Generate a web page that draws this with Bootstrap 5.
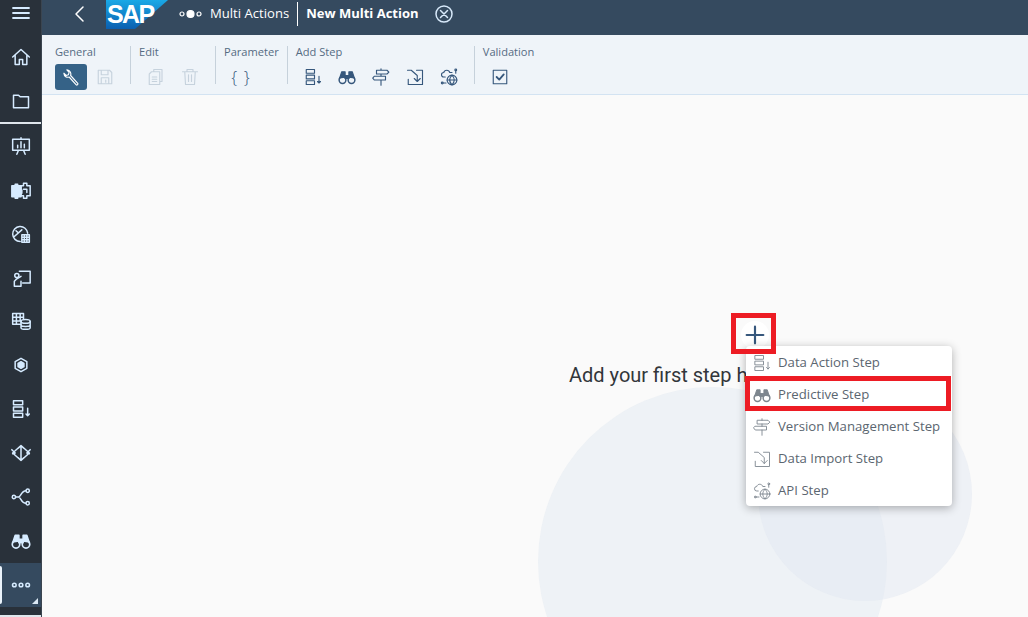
<!DOCTYPE html>
<html lang="en">

<head>
  <meta charset="UTF-8" />
  <meta name="viewport" content="width=device-width, initial-scale=1" />
  <title>New Multi Action</title>
  <link href="https://cdn.jsdelivr.net/npm/bootstrap@5.3.0/dist/css/bootstrap.min.css" rel="stylesheet">
  <style>
    html, body { height: 617px; overflow: hidden; }
    body { font-family: "Open Sans", "Liberation Sans", sans-serif; background: #fafafa; color: #32363a; }
    svg.ico { fill: none; stroke: currentColor; stroke-width: 1.5; stroke-linecap: round; stroke-linejoin: round; display: block; }

    .side-rail { width: 42px; height: 617px; background: #29313a; color: #d6ebff; flex: none; border-right: 1px solid #3b4550; }
    .side-rail svg.ico { stroke-width: 1.8; }
    .rail-burger { height: 35px; padding-bottom: 8px; }
    .rail-item { height: 44px; position: relative; }
    .rail-item svg { width: 20px; height: 20px; }
    .rail-line { height: 2px; background: #dfe6ec; margin: -1px 0 0; position: relative; }
    .rail-active { background: #354a5f; }
    .rail-active::before { content: ""; position: absolute; left: 0; top: 3px; bottom: 3px; width: 2px; background: #eaf3fb; border-radius: 0 2px 2px 0; }
    .rail-active::after { content: ""; position: absolute; right: 3px; bottom: 3px; border-style: solid; border-width: 0 0 6px 6px; border-color: transparent transparent #dbe8f3 transparent; }

    .top-strip { height: 35px; background: #354a5f; color: #fff; padding: 0 0 8px 30px; }
    .sap-logo { width: 62px; height: 30px; margin: 0 11px 0 20px; align-self: flex-start; }
    .sap-word { font: 700 25px "Liberation Sans", sans-serif; fill: #fff; letter-spacing: -1.6px; }
    .crumb { font-size: 13.1px; line-height: 1; }
    .crumb-sep { width: 1px; height: 24px; background: #fff; margin: 0 8px; }
    .crumb-now { font-size: 13px; font-weight: 700; }

    .tool-strip { height: 60px; background: #eff4f9; border-bottom: 1px solid #d3e3f2; padding: 11px 0 0 13px; }
    .tool-group { padding: 0 8px; height: 38px; border-left: 1px solid #c6d1db; }
    .tool-group:first-child { border-left: 0; padding-left: 0; }
    .tool-label { font-size: 11.1px; line-height: 13px; color: #556b82; margin-top: -1px; white-space: nowrap; }
    .tool-btn { width: 34px; height: 26px; color: #36577c; padding: 0; border: 0; background: none; }
    .tool-btn svg { width: 18px; height: 18px; }
    .tool-off { color: #c6d2dd; }
    .tool-on { width: 32px; margin-right: 1px; background: #356287; color: #fff; border-radius: 3px; }
    .tool-row { margin-top: 6px; }
    .brace-txt { font-size: 17px; font-weight: 300; line-height: 1; color: #36577c; letter-spacing: 1px; padding-bottom: 2px; }

    .work-area { position: relative; overflow: hidden; background: #fafafa; padding: 226px 0 0 527px; }
    .bg-disc { position: absolute; border-radius: 50%; }
    .disc-big { width: 349px; height: 349px; left: 496px; top: 292px; background: rgba(225, 234, 241, .5); }
    .disc-small { width: 214px; height: 214px; left: 716px; top: 292px; background: rgba(226, 232, 242, .5); }
    .plus-btn { position: relative; width: 28px; height: 28px; margin-left: 172px; background: #fff; border-radius: 50%; color: #36577c; }
    .plus-btn svg { width: 20px; height: 20px; stroke-width: 2.6; }
    .first-step { position: relative; font-family: Roboto, "Liberation Sans", sans-serif; font-size: 20px; line-height: 27px; margin-top: 13px; white-space: nowrap; }
    .step-menu { position: absolute; left: 704px; top: 251px; width: 206px; background: #fff; border-radius: 4px; box-shadow: 0 2px 10px rgba(0, 0, 0, .3); }
    .step-item { height: 32px; padding: 2px 0 0 7px; gap: 7px; font-size: 13.2px; color: #5b6670; white-space: nowrap; }
    .step-item svg { width: 18px; height: 18px; flex: none; color: #7d868e; stroke-width: 1.2; }
    .red-mark { position: absolute; border: 5px solid #ed1c24; }
    .mark-plus { left: 689px; top: 218px; width: 45px; height: 41px; }
    .mark-item { left: 703px; top: 281px; width: 206px; height: 35px; }
  </style>
</head>

<body>
  <svg width="0" height="0" class="position-absolute">
    <symbol id="i-home" viewBox="0 0 24 24"><path d="M2 12 12 3l10 9M5 10v11h5v-6h4v6h5V10"/></symbol>
    <symbol id="i-folder" viewBox="0 0 24 24"><path d="M3 5h6l2 2h10v13H3z"/></symbol>
    <symbol id="i-board" viewBox="0 0 24 24"><path d="M2 4h20v13H2zM12 2v2M7 22l2-5M17 22l-2-5M8 14v-3M12 14V7M16 14v-4"/></symbol>
    <symbol id="i-puzzle" viewBox="0 0 24 24"><path d="M1 7h4V5h3v2h4v5h1v4h-1v4H8v2H5v-2H1z" fill="currentColor"/><path d="M12 7h3V4h4v3h4v12h-4v3h-4v-3h-3zM15 11h4v4"/></symbol>
    <symbol id="i-gauge" viewBox="0 0 24 24"><path d="M11 21a9 9 0 1 1 9-10M4 15 13 7M6 8l2 2"/><path d="M13 13h9v9h-9zM16 13v9M19 13v9M13 16h9M13 19h9"/></symbol>
    <symbol id="i-person" viewBox="0 0 24 24"><path d="M10 4h13v14H14M4 22v-6l3-3 5-3M4 22h8v-6"/><circle cx="7" cy="9" r="2.5"/></symbol>
    <symbol id="i-tabledb" viewBox="0 0 24 24"><path d="M12 16H2V3h13v7M2 7.500h13M2 12h10M6.500 3v13M11 3v9"/><ellipse cx="17.500" cy="12.500" rx="5.500" ry="2.200"/><path d="M12 12.500v7.500c0 1.200 2.500 2 5.500 2s5.500-.8 5.500-2v-7.500M12 16.500c0 1.200 2.500 2 5.500 2s5.500-.8 5.500-2"/></symbol>
    <symbol id="i-cube" viewBox="0 0 24 24"><path d="M12 4l7 4v8l-7 4-7-4V8z"/><path d="M12 8l3.500 2v4L12 16l-3.500-2v-4z" fill="currentColor"/></symbol>
    <symbol id="i-steps" viewBox="0 0 24 24"><path d="M3 2h11v5H3zM3 9.500h11v5H3zM3 17h11v5H3zM20 11v9M18 18l2 2 2-2"/></symbol>
    <symbol id="i-diamond" viewBox="0 0 24 24"><path d="M12 3l10 9-10 9L2 12zM12 3v18M1 8l4 4-3 1M23 8l-4 4 3 1M9 6l3-3 3 3M9 18l3 3 3-3"/></symbol>
    <symbol id="i-share" viewBox="0 0 24 24"><circle cx="3.500" cy="12" r="2"/><circle cx="20" cy="4.500" r="2"/><circle cx="20" cy="19.500" r="2"/><path d="M5.500 12H9c3 0 3-7.500 9-7.500M9 12c3 0 3 7.500 9 7.500"/></symbol>
    <symbol id="i-binoc" viewBox="0 0 24 24"><circle cx="6" cy="16" r="4.500" stroke-width="2"/><circle cx="18" cy="16" r="4.500" stroke-width="2"/><path d="M2 14 5 5h4.500v8M22 14 19 5h-4.500v8M9.500 10h5v4h-5z" fill="currentColor"/></symbol>
    <symbol id="i-dots" viewBox="0 0 24 24"><circle cx="4" cy="12" r="2.200"/><circle cx="12" cy="12" r="2.200"/><circle cx="20" cy="12" r="2.200"/></symbol>
    <symbol id="i-wrench" viewBox="0 0 24 24"><path d="M21 20.500 11.500 10c1-3-.5-7-5-7.500L9.500 6l-1 3-3 1L2.500 7c.3 4.500 4 6 7 5L19 22.500c1 .8 2.800-.8 2-2z"/></symbol>
    <symbol id="i-save" viewBox="0 0 24 24"><path d="M3 3h15l3 3v15H3zM7 3v6h9V3M7 21v-8h10v8M13 16v3"/></symbol>
    <symbol id="i-copy" viewBox="0 0 24 24"><path d="M9 5V2h11v16h-3M3 8l3-3h11v17H3zM7 12h6M7 15h6M7 18h6"/></symbol>
    <symbol id="i-trash" viewBox="0 0 24 24"><path d="M2 5h20M8 5V2h8v3M5 5l1 17h12l1-17M10 9v9M14 9v9"/></symbol>
    <symbol id="i-sign" viewBox="0 0 24 24"><path d="M6 3h14l2.500 2.500L20 8H6zM12 3V1M3 11h15v5H3l-2-2.500zM12 8v3M12 16v7"/></symbol>
    <symbol id="i-import" viewBox="0 0 24 24"><path d="M2 3h5l8 7v8M11 14l4 4 4-4M14 3h8v19H3v-7"/></symbol>
    <symbol id="i-cloud" viewBox="0 0 24 24"><circle cx="16" cy="16" r="6.500"/><path d="M9.500 16h13M16 9.500c-4 4-4 9 0 13M16 9.500c4 4 4 9 0 13M7 12H5a3 3 0 0 1 0-6c1-4 7-4 8 0h3M21 7V3"/><circle cx="21" cy="2.500" r="1.200"/><circle cx="3" cy="20" r="1.200"/><path d="M4 20h4"/></symbol>
    <symbol id="i-check" viewBox="0 0 24 24"><path d="M3 3h18v18H3z"/><path d="M7.500 12l3.500 3.500 6-7" stroke-width="2.400"/></symbol>
    <symbol id="i-plus" viewBox="0 0 24 24"><path d="M12 2v20M2 12h20"/></symbol>
  </svg>

  <div class="d-flex">
    <div class="side-rail d-flex flex-column">
      <div class="rail-burger d-flex align-items-center justify-content-center">
        <svg class="ico" width="18" height="14" viewBox="0 0 18 14"><path d="M1 2h16M1 7h16M1 12h16"/></svg>
      </div>
      <div class="rail-item d-flex align-items-center justify-content-center"><svg class="ico"><use href="#i-home"/></svg></div>
      <div class="rail-item d-flex align-items-center justify-content-center"><svg class="ico"><use href="#i-folder"/></svg></div>
      <div class="rail-line"></div>
      <div class="rail-item d-flex align-items-center justify-content-center"><svg class="ico"><use href="#i-board"/></svg></div>
      <div class="rail-item d-flex align-items-center justify-content-center"><svg class="ico"><use href="#i-puzzle"/></svg></div>
      <div class="rail-item d-flex align-items-center justify-content-center"><svg class="ico"><use href="#i-gauge"/></svg></div>
      <div class="rail-item d-flex align-items-center justify-content-center"><svg class="ico"><use href="#i-person"/></svg></div>
      <div class="rail-item d-flex align-items-center justify-content-center"><svg class="ico"><use href="#i-tabledb"/></svg></div>
      <div class="rail-item d-flex align-items-center justify-content-center"><svg class="ico"><use href="#i-cube"/></svg></div>
      <div class="rail-item d-flex align-items-center justify-content-center"><svg class="ico"><use href="#i-steps"/></svg></div>
      <div class="rail-item d-flex align-items-center justify-content-center"><svg class="ico"><use href="#i-diamond"/></svg></div>
      <div class="rail-item d-flex align-items-center justify-content-center"><svg class="ico"><use href="#i-share"/></svg></div>
      <div class="rail-item d-flex align-items-center justify-content-center"><svg class="ico"><use href="#i-binoc"/></svg></div>
      <div class="rail-item rail-active d-flex align-items-center justify-content-center"><svg class="ico"><use href="#i-dots"/></svg></div>
      <div class="rail-line mt-2"></div>
    </div>

    <div class="flex-grow-1 d-flex flex-column" style="min-width:0">
      <div class="top-strip d-flex align-items-center">
        <svg class="ico" width="14" height="18" viewBox="0 0 14 18"><path d="M11 2 4 9l7 7"/></svg>
        <svg class="sap-logo" viewBox="0 0 62 30">
          <defs>
            <linearGradient id="sapBlue" x1="0" y1="0" x2="0" y2="1">
              <stop offset="0" stop-color="#1aa9e6"/>
              <stop offset="1" stop-color="#0a5fb0"/>
            </linearGradient>
          </defs>
          <polygon points="0,0 62,0 29,29 0,29" fill="url(#sapBlue)"/>
          <text class="sap-word" x="1" y="23">SAP</text>
        </svg>
        <svg class="ico me-2" width="23" height="10" viewBox="0 0 23 10" style="stroke-width:1.2"><circle cx="3" cy="5" r="2"/><circle cx="11.500" cy="5" r="3.500" fill="currentColor"/><circle cx="20" cy="5" r="2"/></svg>
        <span class="crumb">Multi Actions</span>
        <span class="crumb-sep"></span>
        <span class="crumb crumb-now">New Multi Action</span>
        <svg class="ico ms-3" width="18" height="18" viewBox="0 0 18 18" style="color:#d7e9fa"><circle cx="9" cy="9" r="8"/><path d="m5.500 5.500 7 7M12.500 5.500l-7 7"/></svg>
      </div>

      <div class="tool-strip d-flex">
        <div class="tool-group">
          <div class="tool-label">General</div>
          <div class="tool-row d-flex">
            <button class="tool-btn tool-on d-flex align-items-center justify-content-center"><svg class="ico"><use href="#i-wrench"/></svg></button>
            <button class="tool-btn tool-off d-flex align-items-center justify-content-center"><svg class="ico"><use href="#i-save"/></svg></button>
          </div>
        </div>
        <div class="tool-group">
          <div class="tool-label">Edit</div>
          <div class="tool-row d-flex">
            <button class="tool-btn tool-off d-flex align-items-center justify-content-center"><svg class="ico"><use href="#i-copy"/></svg></button>
            <button class="tool-btn tool-off d-flex align-items-center justify-content-center"><svg class="ico"><use href="#i-trash"/></svg></button>
          </div>
        </div>
        <div class="tool-group">
          <div class="tool-label">Parameter</div>
          <div class="tool-row d-flex">
            <button class="tool-btn brace-txt d-flex align-items-center justify-content-center">{ }</button>
          </div>
        </div>
        <div class="tool-group">
          <div class="tool-label">Add Step</div>
          <div class="tool-row d-flex">
            <button class="tool-btn d-flex align-items-center justify-content-center"><svg class="ico"><use href="#i-steps"/></svg></button>
            <button class="tool-btn d-flex align-items-center justify-content-center"><svg class="ico"><use href="#i-binoc"/></svg></button>
            <button class="tool-btn d-flex align-items-center justify-content-center"><svg class="ico"><use href="#i-sign"/></svg></button>
            <button class="tool-btn d-flex align-items-center justify-content-center"><svg class="ico"><use href="#i-import"/></svg></button>
            <button class="tool-btn d-flex align-items-center justify-content-center"><svg class="ico"><use href="#i-cloud"/></svg></button>
          </div>
        </div>
        <div class="tool-group">
          <div class="tool-label">Validation</div>
          <div class="tool-row d-flex">
            <button class="tool-btn d-flex align-items-center justify-content-center"><svg class="ico"><use href="#i-check"/></svg></button>
          </div>
        </div>
      </div>

      <div class="work-area flex-grow-1">
        <div class="bg-disc disc-big"></div>
        <div class="bg-disc disc-small"></div>
        <div class="plus-btn d-flex align-items-center justify-content-center"><svg class="ico"><use href="#i-plus"/></svg></div>
        <div class="first-step">Add your first step here</div>

        <div class="step-menu">
          <div class="step-item d-flex align-items-center"><svg class="ico"><use href="#i-steps"/></svg>Data Action Step</div>
          <div class="step-item d-flex align-items-center"><svg class="ico"><use href="#i-binoc"/></svg>Predictive Step</div>
          <div class="step-item d-flex align-items-center"><svg class="ico"><use href="#i-sign"/></svg>Version Management Step</div>
          <div class="step-item d-flex align-items-center"><svg class="ico"><use href="#i-import"/></svg>Data Import Step</div>
          <div class="step-item d-flex align-items-center"><svg class="ico"><use href="#i-cloud"/></svg>API Step</div>
        </div>
        <div class="red-mark mark-plus"></div>
        <div class="red-mark mark-item"></div>
      </div>
    </div>
  </div>

  <script src="https://cdn.jsdelivr.net/npm/bootstrap@5.3.0/dist/js/bootstrap.bundle.min.js"></script>
</body>

</html>
